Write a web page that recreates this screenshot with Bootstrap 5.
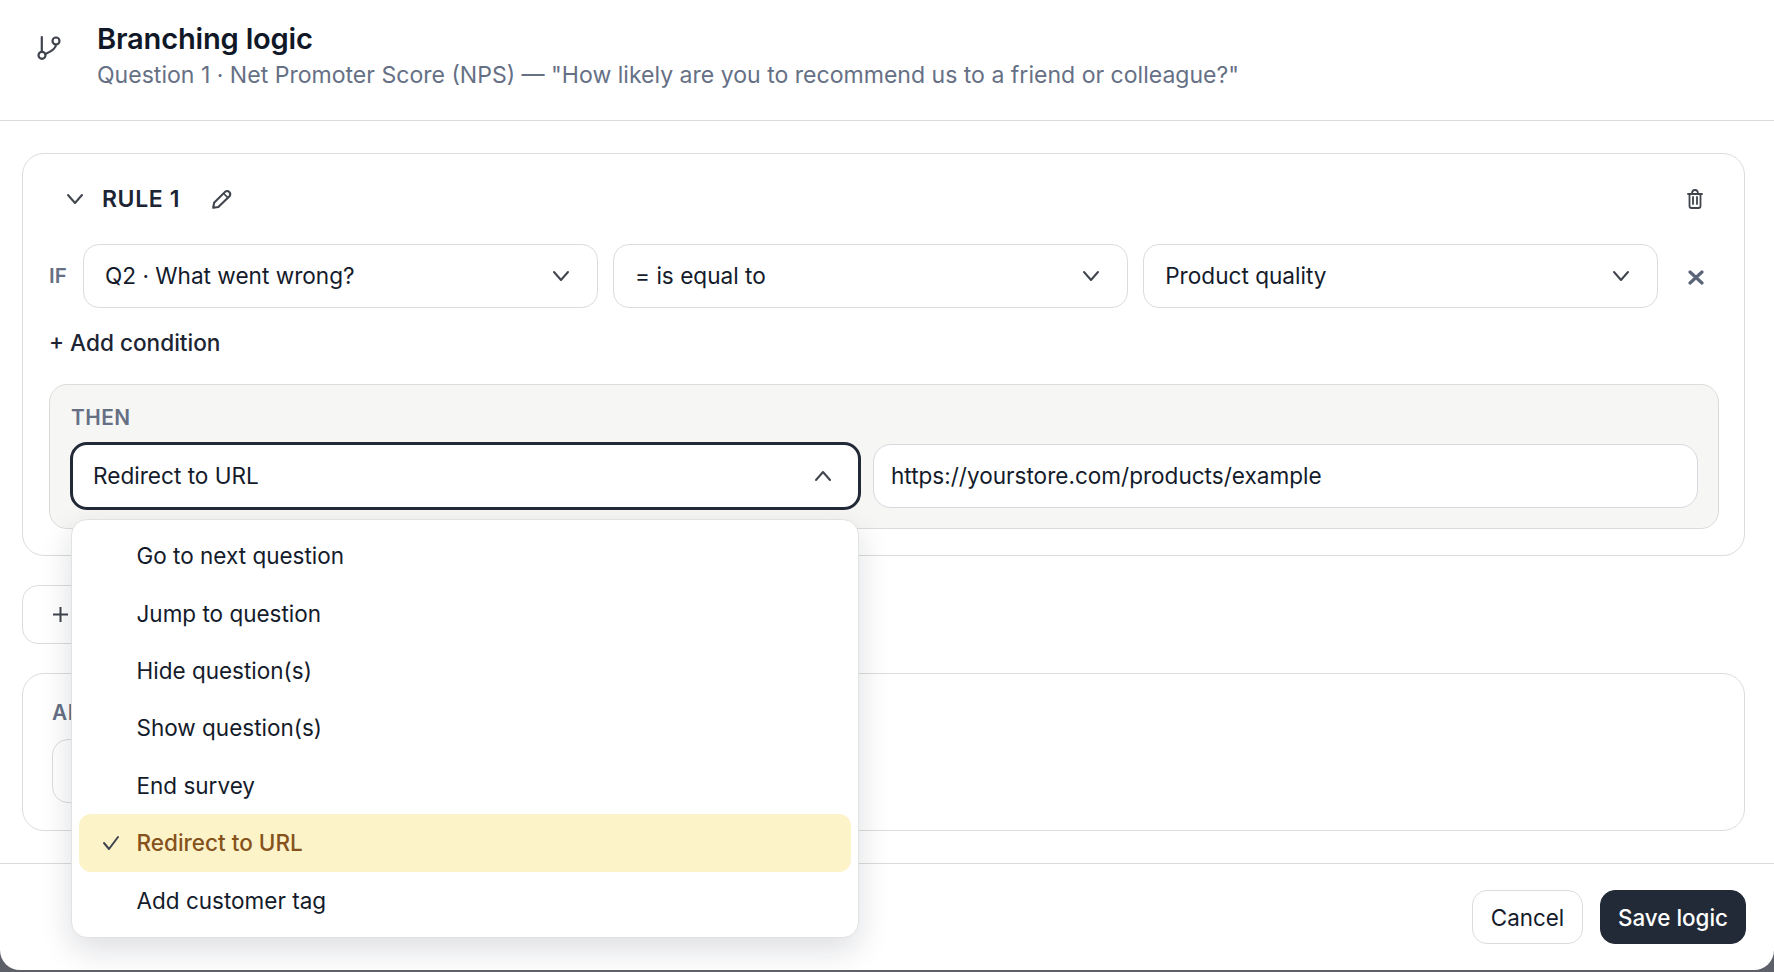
<!DOCTYPE html>
<html lang="en">
<head>
  <meta charset="UTF-8">
  <title>Branching logic</title>
  <link href="https://cdn.jsdelivr.net/npm/bootstrap@5.3.0/dist/css/bootstrap.min.css" rel="stylesheet">
  <style>
    html, body { height: 100%; }
    body { background: #5d6068; font-family: Inter, "Liberation Sans", sans-serif; color: #141b2b; overflow: hidden; }
    .sheet { height: 970px; background: #fff; border-radius: 0 0 20px 20px; overflow: hidden; }
    .sheet-head { height: 121px; border-bottom: 1px solid #dcdcd8; padding: 22px 0 0 35px; }
    .head-icon { width: 28px; height: 28px; margin-top: 13px; margin-right: 34px; color: #3f444d; flex: none; }
    .head-title { font-size: 29.1px; font-weight: 600; line-height: 34px; color: #101828; letter-spacing: -.2px; }
    .head-sub { font-size: 23.06px; line-height: 30px; color: #667085; margin-top: 4px; }
    .sheet-body { padding: 32px 29px 0 22px; }
    .rule-box { height: 403px; border: 1px solid #dcdcd8; border-radius: 22px; padding: 0 25px 0 26px; }
    .rule-head { height: 90px; padding: 0 16px 0 15px; }
    .rule-name { font-size: 23px; letter-spacing: .6px; font-weight: 600; color: #1d2433; margin: 0 31px 0 16px; }
    .if-row { gap: 14.5px; }
    .if-label { width: 19px; font-size: 20.5px; font-weight: 600; color: #667085; }
    .pick { height: 64px; width: 515.6px; flex: none; border: 1px solid #dcdcd8; border-radius: 16px; padding: 0 25px 0 21.5px; background: #fff; font-size: 22.6px; color: #141b2b; }
    .row-x { margin: 3px 0 0 15px; flex: none; }
    .add-cond { height: 70px; margin-bottom: 6px; font-size: 22.6px; font-weight: 500; color: #1d2433; }
    .then-box { height: 145px; background: #f6f6f4; border: 1px solid #dcdcd8; border-radius: 18px; padding: 20px 20px 0 20px; }
    .then-label { font-size: 20.8px; font-weight: 600; color: #667085; letter-spacing: .5px; line-height: 25px; margin: 0 0 12px 1px; }
    .then-row { gap: 12.5px; }
    .pick-open { height: 68px; width: 790.5px; border: 3px solid #232a37; border-radius: 17px; padding: 0 24px 0 20px; }
    .url-field { height: 64px; flex: 1 1 0; border: 1px solid #d8d8de; border-radius: 18px; padding: 0 17px; font-size: 22.55px; background: #fff; color: #141b2b; }
    .menu-pop { position: absolute; left: 1px; top: 77px; width: 788px; height: 419px; padding: 7.5px 7px; border: 1px solid #e2e2e0; border-radius: 16px; background: #fff; box-shadow: 0 12px 32px rgba(16,24,40,.14); z-index: 10; }
    .menu-pop .dropdown-item { height: 57.4px; display: flex; align-items: center; padding: 0 0 0 57.5px; font-size: 22.5px; color: #141b2b; border-radius: 12px; position: relative; }
    .menu-pop .dropdown-item.active { background: #fdf3c9; color: #85521c; font-weight: 500; }
    .tick { position: absolute; left: 22px; top: 20px; width: 20px; height: 18px; color: #3f444d; }
    .add-rule { height: 59px; width: 200px; margin-top: 29px; border: 1px solid #dcdcd8; border-radius: 16px; padding: 0 0 0 30px; font-size: 22.6px; background: #fff; color: #3f444d; gap: 8px; }
    .else-box { height: 158px; margin-top: 29px; border: 1px solid #dcdcd8; border-radius: 22px; padding: 27px 0 0 29px; }
    .else-label { font-size: 20.8px; font-weight: 600; color: #667085; line-height: 24px; letter-spacing: .5px; }
    .else-field { width: 500px; height: 64px; margin-top: 14px; border: 1px solid #dcdcd8; border-radius: 16px; }
    .sheet-foot { position: absolute; left: 0; right: 0; top: 863px; height: 107px; border-top: 1px solid #dcdcd8; padding: 26px 28px 0 0; }
    .btn-cancel, .btn-save { height: 54px; font-size: 22.4px; border-radius: 15px; padding: 2px 0 0; }
    .btn-cancel { width: 111px; background: #fff; border: 1px solid #dcdcd8; color: #141b2b; }
    .btn-save { width: 146px; margin-left: 17px; background: #232a37; border: 1px solid #232a37; color: #fff; font-weight: 500; }
    .chev { width: 22px; height: 14px; color: #3f444d; flex: none; }
  </style>
</head>
<body>
  <div class="sheet position-relative">

    <!-- Header -->
    <div class="sheet-head d-flex align-items-start">
      <svg class="head-icon" viewBox="0 0 28 28" fill="none" stroke="currentColor" stroke-width="2.2" stroke-linecap="round"><circle cx="7" cy="20.3" r="3.5"/><circle cx="21" cy="6" r="3.5"/><path d="M6.8 2v14.500M21 9.500c0 4.500-6 7.500-10.500 9.500"/></svg>
      <div>
        <div class="head-title">Branching logic</div>
        <div class="head-sub">Question 1 · Net Promoter Score (NPS) — "How likely are you to recommend us to a friend or colleague?"</div>
      </div>
    </div>

    <div class="sheet-body">
      <!-- Rule -->
      <div class="rule-box">
        <div class="rule-head d-flex align-items-center">
          <svg class="chev" viewBox="0 0 22 14" fill="none" stroke="currentColor" stroke-width="2" stroke-linecap="round" stroke-linejoin="round"><path d="M4 3l7 8 7-8"/></svg>
          <span class="rule-name">RULE 1</span>
          <svg width="22" height="22" viewBox="0 0 20 20" fill="none" stroke="#3f444d" stroke-width="1.9" stroke-linejoin="round"><path d="M2 18l.8-4.500L13 3.300a2.900 2.900 0 0 1 4 4L6.700 17.200z"/><path d="M11.500 5l3.800 3.800" stroke-width="1.500"/></svg>
          <svg class="ms-auto" width="16" height="20" viewBox="0 0 16 20" fill="none" stroke="#3f444d" stroke-width="1.8" stroke-linecap="round" stroke-linejoin="round"><path d="M1 5h14M5 5c0-3 1-4 3-4s3 1 3 4M2.500 5v12c0 1.200.8 2 2 2h7c1.200 0 2-.8 2-2V5M6 8v7M10 8v7"/></svg>
        </div>
        <div class="if-row d-flex align-items-center">
          <div class="if-label">IF</div>
          <div class="pick d-flex align-items-center justify-content-between">Q2 · What went wrong?
            <svg class="chev" viewBox="0 0 22 14" fill="none" stroke="currentColor" stroke-width="2" stroke-linecap="round" stroke-linejoin="round"><path d="M4 3l7 8 7-8"/></svg></div>
          <div class="pick d-flex align-items-center justify-content-between">= is equal to
            <svg class="chev" viewBox="0 0 22 14" fill="none" stroke="currentColor" stroke-width="2" stroke-linecap="round" stroke-linejoin="round"><path d="M4 3l7 8 7-8"/></svg></div>
          <div class="pick d-flex align-items-center justify-content-between">Product quality
            <svg class="chev" viewBox="0 0 22 14" fill="none" stroke="currentColor" stroke-width="2" stroke-linecap="round" stroke-linejoin="round"><path d="M4 3l7 8 7-8"/></svg></div>
          <svg class="row-x" width="16" height="15" viewBox="0 0 16 15" fill="none" stroke="#5b6478" stroke-width="3.2" stroke-linecap="round"><path d="M2 2l12 11M14 2L2 13"/></svg>
        </div>
        <div class="add-cond d-flex align-items-center">+ Add condition</div>
        <div class="then-box">
          <div class="then-label">THEN</div>
          <div class="then-row d-flex align-items-center position-relative">
            <div class="pick pick-open d-flex align-items-center justify-content-between">Redirect to URL
              <svg class="chev" viewBox="0 0 22 14" fill="none" stroke="currentColor" stroke-width="2" stroke-linecap="round" stroke-linejoin="round"><path d="M4 11l7-8 7 8"/></svg></div>
            <div class="url-field d-flex align-items-center">https://yourstore.com/products/example</div>
            <ul class="menu-pop list-unstyled m-0">
              <li><a class="dropdown-item" href="#">Go to next question</a></li>
              <li><a class="dropdown-item" href="#">Jump to question</a></li>
              <li><a class="dropdown-item" href="#">Hide question(s)</a></li>
              <li><a class="dropdown-item" href="#">Show question(s)</a></li>
              <li><a class="dropdown-item" href="#">End survey</a></li>
              <li><a class="dropdown-item active" href="#"><svg class="tick" viewBox="0 0 20 18" fill="none" stroke="currentColor" stroke-width="2" stroke-linecap="round" stroke-linejoin="round"><path d="M3 9l5 6 9-12"/></svg>Redirect to URL</a></li>
              <li><a class="dropdown-item" href="#">Add customer tag</a></li>
            </ul>
          </div>
        </div>
      </div>

      <!-- Add rule -->
      <div class="add-rule d-flex align-items-center"><svg width="15" height="15" viewBox="0 0 15 15" fill="none" stroke="currentColor" stroke-width="2"><path d="M7.500 0v15M0 7.500h15"/></svg>Add rule</div>

      <!-- Fallback -->
      <div class="else-box">
        <div class="else-label">ALL OTHER ANSWERS</div>
        <div class="else-field"></div>
      </div>
    </div>

    <!-- Footer -->
    <div class="sheet-foot d-flex justify-content-end align-items-start">
      <button type="button" class="btn btn-cancel">Cancel</button>
      <button type="button" class="btn btn-save">Save logic</button>
    </div>
  </div>

  <script src="https://cdn.jsdelivr.net/npm/bootstrap@5.3.0/dist/js/bootstrap.bundle.min.js"></script>
</body>
</html>
